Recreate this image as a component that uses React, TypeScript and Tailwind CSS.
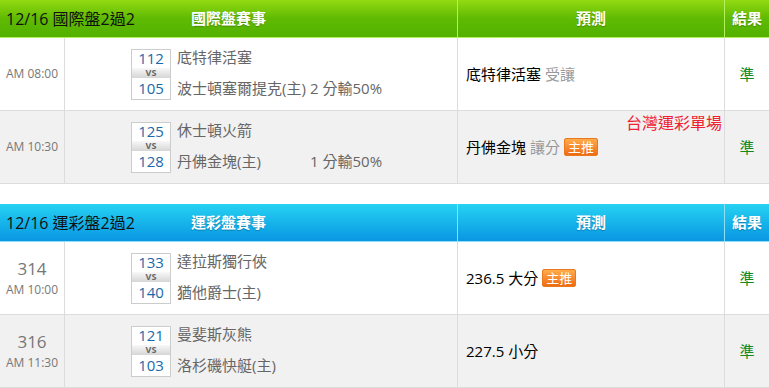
const font = "font-['Open_Sans','Noto_Sans_CJK_TC',sans-serif]";

type Game = {
  no?: string;
  time: string;
  home: [string, string];
  away: [string, string];
  spread?: string;
  pick: string;
  pickNote?: string;
  hot?: boolean;
  tag?: string;
};

const intl: Game[] = [
  {
    time: "AM 08:00",
    home: ["112", "底特律活塞"],
    away: ["105", "波士頓塞爾提克(主)"],
    spread: "2 分輸50%",
    pick: "底特律活塞",
    pickNote: "受讓",
  },
  {
    time: "AM 10:30",
    home: ["125", "休士頓火箭"],
    away: ["128", "丹佛金塊(主)"],
    spread: "1 分輸50%",
    pick: "丹佛金塊",
    pickNote: "讓分",
    hot: true,
    tag: "台灣運彩單場",
  },
];

const lottery: Game[] = [
  {
    no: "314",
    time: "AM 10:00",
    home: ["133", "達拉斯獨行俠"],
    away: ["140", "猶他爵士(主)"],
    pick: "236.5 大分",
    hot: true,
  },
  {
    no: "316",
    time: "AM 11:30",
    home: ["121", "曼斐斯灰熊"],
    away: ["103", "洛杉磯快艇(主)"],
    pick: "227.5 小分",
  },
];

const Badge = () => (
  <span className="ml-1 inline-flex h-[18px] items-center rounded-[2px] border border-[#e8791e] bg-gradient-to-b from-[#ffac4a] to-[#ee6a0c] px-[3px] text-[13px] leading-none text-white">
    主推
  </span>
);

const Row = ({ g, gray }: { g: Game; gray: boolean }) => (
  <div
    className={`grid h-[73px] grid-cols-[65px_393px_267px_1fr] border-b border-[#dcdcdc] ${
      gray ? "bg-[#f1f1f1]" : "bg-white"
    }`}
  >
    <div className="flex flex-col items-center justify-center border-r border-[#dcdcdc] text-[#777]">
      {g.no && <span className="mb-[7px] text-[17px] leading-none">{g.no}</span>}
      <span className="text-[12px] leading-none">{g.time}</span>
    </div>
    <div className="flex items-center border-r border-[#dcdcdc] pl-[66px]">
      <div className="flex w-[40px] flex-col border border-[#cccccc] bg-white text-center text-[15px] leading-none text-[#1a69aa]">
        <span className="flex h-[18px] items-center justify-center">{g.home[0]}</span>
        <span className="flex h-[10px] items-center justify-center bg-gradient-to-b from-[#f8f8f8] to-[#d6d6d6] text-[9px] font-bold leading-[9px] text-[#666]">
          VS
        </span>
        <span className="flex h-[21px] items-center justify-center">{g.away[0]}</span>
      </div>
      <div className="ml-[6px] flex flex-col text-[15px] leading-none text-[#666]">
        <span className="flex h-[19px] items-center">{g.home[1]}</span>
        <span className="h-[10px]" />
        <span className="flex h-[23px] items-center">
          <span className="inline-block min-w-[133px]">{g.away[1]}</span>
          {g.spread && <span>{g.spread}</span>}
        </span>
      </div>
    </div>
    <div className="relative flex items-center border-r border-[#dcdcdc] pl-2 text-[15px] text-black">
      {g.tag && (
        <span className="absolute right-[2px] top-[4px] text-[16px] leading-none text-[#ee2233]">
          {g.tag}
        </span>
      )}
      <span>{g.pick}</span>
      {g.pickNote && <span className="ml-1 text-[#999]">{g.pickNote}</span>}
      {g.hot && <Badge />}
    </div>
    <div className="flex items-center justify-center text-[15px] text-[#138a1e]">準</div>
  </div>
);

const Table = ({
  title,
  label,
  games,
  blue,
}: {
  title: string;
  label: string;
  games: Game[];
  blue?: boolean;
}) => {
  const head = blue
    ? "bg-gradient-to-b from-[#27d2f2] to-[#0a96e2] border-[#8fe0f6]"
    : "bg-gradient-to-b from-[#92da12] via-[#5fba02] to-[#52b100] border-[#b4ef5c]";
  const line = blue ? "border-[#8fe0f6]" : "border-[#b4ef5c]";
  return (
    <div>
      <div className={`grid h-[38px] grid-cols-[458px_267px_1fr] border-b ${head}`}>
        <div className={`grid grid-cols-[1fr_auto_1fr] items-center border-r ${line}`}>
          <span className="pl-[6px] text-[16px] leading-none text-[#111]">{title}</span>
          <span className="text-[15px] font-bold text-white [text-shadow:0_1px_1px_rgba(0,0,0,0.25)]">
            {label}
          </span>
          <span />
        </div>
        <div
          className={`flex items-center justify-center border-r ${line} text-[15px] font-bold text-white [text-shadow:0_1px_1px_rgba(0,0,0,0.25)]`}
        >
          預測
        </div>
        <div className="flex items-center justify-center text-[15px] font-bold text-white [text-shadow:0_1px_1px_rgba(0,0,0,0.25)]">
          結果
        </div>
      </div>
      {games.map((g, i) => (
        <Row key={g.home[0]} g={g} gray={i % 2 === 1} />
      ))}
    </div>
  );
};

export default function App() {
  return (
    <div className={`h-[388px] w-[769px] overflow-hidden bg-white ${font}`}>
      <Table title="12/16 國際盤2過2" label="國際盤賽事" games={intl} />
      <div className="h-[20px]" />
      <Table title="12/16 運彩盤2過2" label="運彩盤賽事" games={lottery} blue />
    </div>
  );
}
